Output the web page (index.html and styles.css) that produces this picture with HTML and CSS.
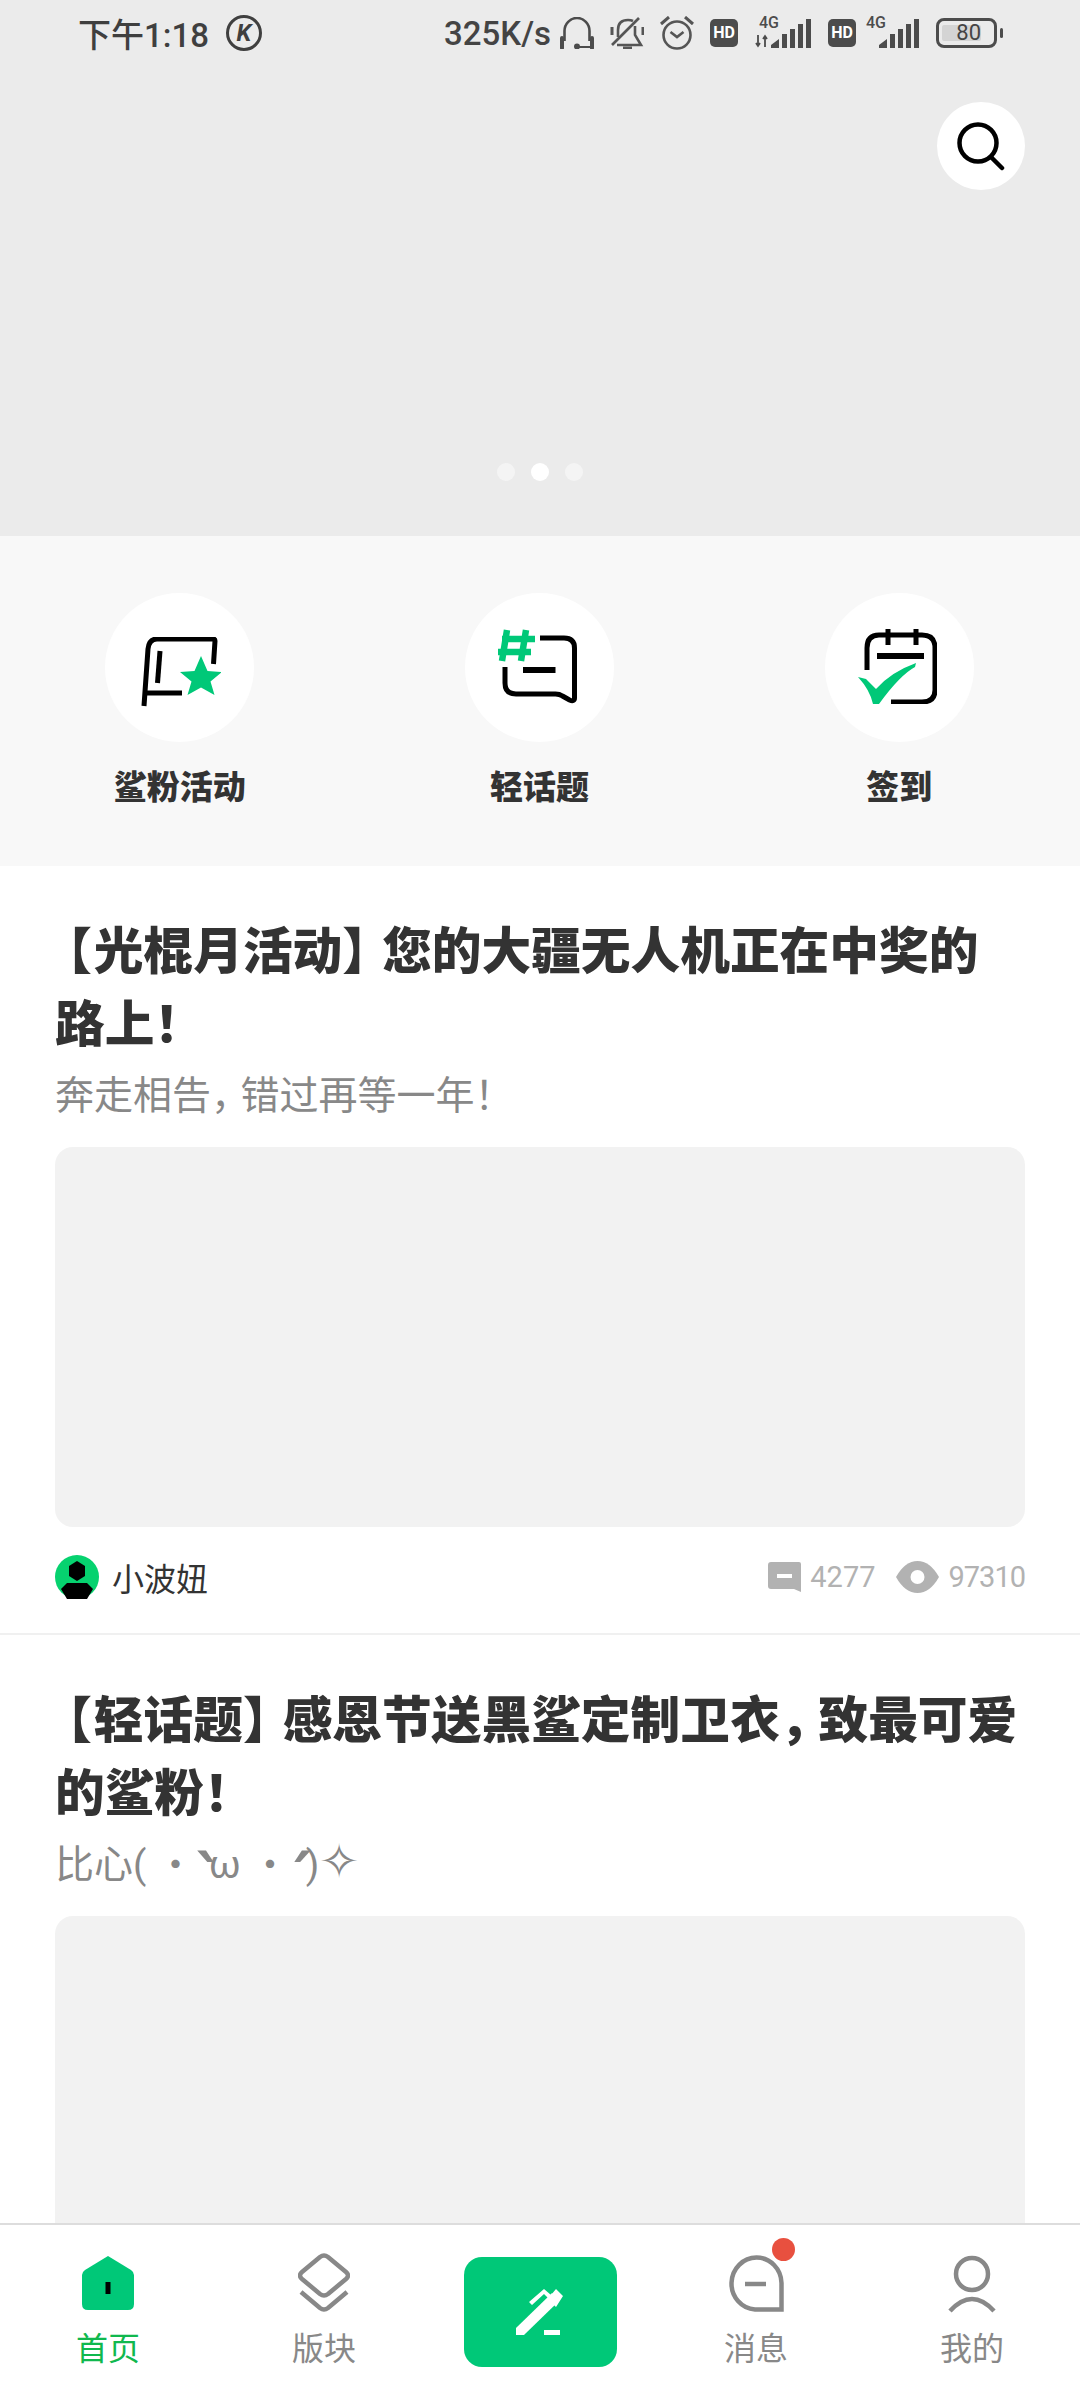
FILE: index.html
```html
<!doctype html>
<html>
<head>
  <title>首页</title>
  <meta charset="utf-8">
  <link rel="stylesheet" href="styles.css">
</head>
<body>
  <div class="phone">
    <div class="hero">
      <div class="status">
        <div class="status-left">
          <span class="clock">下午1:18</span>
          <span class="k-badge">K</span>
        </div>
        <div class="status-right">
          <span class="speed">325K/s</span>
          <svg class="st-icon" width="34" height="32" viewBox="0 0 34 32" fill="none" stroke="#4c4c4c" stroke-width="2.6"><path d="M4.500 24V14a12.500 13 0 0 1 25 0v10"/><path d="M2 21v10M32 21v10" stroke-width="4" stroke-linecap="round"/><path d="M17 30h13" stroke-width="2"/><circle cx="17" cy="29.500" r="3" fill="#4c4c4c" stroke="none"/></svg>
          <svg class="st-icon" width="34" height="32" viewBox="0 0 34 32" fill="none" stroke="#555" stroke-width="2.6"><path d="M8 20v-7Q8 3 18 3q3 0 5 1"/><path d="M25 9v9l6 10H7"/><path d="M2 28 29 1"/><path d="M2 10v8M33 10v8" stroke-width="3"/><path d="M13 31h9" stroke-width="3"/></svg>
          <svg class="st-icon" width="34" height="34" viewBox="0 0 34 34" fill="none" stroke="#555" stroke-width="2.6"><circle cx="17" cy="19" r="13.500"/><path d="m10.500 16 6.500 5 6.500-5"/><path d="M1 8l8-7M33 8l-8-7" stroke-width="3"/></svg>
          <span class="hd">HD</span>
          <span class="net net-one">
            <span class="four-g">4G</span>
            <svg width="56" height="32" viewBox="0 0 56 32" fill="#4c4c4c"><path d="M3 18v11M1 26l2 3 2-3M10 30V19M8 22l2-3 2 3" fill="none" stroke="#4c4c4c" stroke-width="1.8"/><path d="M16 31v-3l8-6v9zM27 31V17h5v14zM35 31V12h5v19zM43 31V7h5v24zM51 31V2h5v29z"/></svg>
          </span>
          <span class="hd">HD</span>
          <span class="net net-two">
            <span class="four-g">4G</span>
            <svg width="53" height="32" viewBox="0 0 53 32" fill="#4c4c4c"><path d="M13 31v-3l8-6v9zM24 31V17h5v14zM32 31V12h5v19zM40 31V7h5v24zM48 31V2h5v29z"/></svg>
          </span>
          <span class="battery"><span class="battery-num">80</span></span>
        </div>
      </div>
      <div class="search-row">
        <div class="search-btn">
          <svg width="50" height="50" viewBox="0 0 50 50" fill="none" stroke="#000" stroke-width="4.500" stroke-linecap="round"><circle cx="22" cy="22" r="18.500"/><path d="m35 36 11 11"/></svg>
        </div>
      </div>
      <div class="dots">
        <span class="dot"></span>
        <span class="dot on"></span>
        <span class="dot"></span>
      </div>
    </div>

    <div class="quick">
      <div class="quick-item">
        <div class="quick-circle">
          <svg class="qi-star" width="80" height="70" viewBox="0 0 80 70" fill="none" stroke="#000" stroke-width="5"><path d="M3 69 7 12q1-10 9-10h56q2 0 2 2l-1.500 23"/><path d="M3.500 56H41"/><path d="M19 14l-2.500 32"/><path d="M60 19l6.500 15 14.500 1-11.500 9.500 4 13.500-13.500-7.500-13.500 7.500 4-13.500-11.500-9.500 14.500-1z" fill="#00c878" stroke="none"/></svg>
        </div>
        <div class="quick-label">鲨粉活动</div>
      </div>
      <div class="quick-item">
        <div class="quick-circle">
          <svg class="qi-topic" width="80" height="76" viewBox="0 0 80 76" fill="none" stroke="#000" stroke-width="5"><path d="M43 10h24q10.500 0 10.500 10v50q0 4-5 2l-7-4q-3-2-7-2H19Q8 66 8 55V39"/><path d="M26 42h32.500" stroke-width="6"/><path d="M10 2 5 33M29 2l-5 31M5 11h33M1 24h33" stroke="#00c878" stroke-width="6.500"/></svg>
        </div>
        <div class="quick-label">轻话题</div>
      </div>
      <div class="quick-item">
        <div class="quick-circle">
          <svg class="qi-sign" width="79" height="75" viewBox="0 0 79 75" fill="none" stroke="#000" stroke-width="5"><path d="M9 41V19Q9 6 21 6h43q13 0 13 13v42q0 12-13 12H33"/><path d="M30 0v16M58 0v16"/><path d="M19 27h47" stroke-width="6"/><path d="M0 48l8 2 10 10q15-17 40-26l-1 4Q42 46 21 75h-6Q12 61 0 48z" fill="#00c878" stroke="none"/></svg>
        </div>
        <div class="quick-label">签到</div>
      </div>
    </div>

    <div class="post">
      <h2 class="post-title"><span class="br-l">【</span>光棍月活动<span class="br-r">】</span>您的大疆无人机正在中奖的路上！</h2>
      <p class="post-sub">奔走相告<span class="sub-comma">，</span>错过再等一年！</p>
      <div class="post-img"></div>
      <div class="post-meta">
        <div class="author">
          <svg class="avatar" width="44" height="44" viewBox="0 0 44 44"><circle cx="22" cy="22" r="22" fill="#06d26f"/><path d="M22 6l8 5v10l-8 5-8-5V11z" fill="#000"/><path d="M12 28h20l6 6-6 10H12L6 34z" fill="#000"/></svg>
          <span class="author-name">小波妞</span>
        </div>
        <div class="stats">
          <svg width="33" height="30" viewBox="0 0 33 30"><path d="M3 0h28q2 0 2 2v28l-7-3H3q-3 0-3-3V3q0-3 3-3z" fill="#b2b2b2"/><rect x="9" y="12" width="15" height="4" fill="#fff"/></svg>
          <span class="stat-num comments">4277</span>
          <svg width="43" height="32" viewBox="0 0 43 32"><path d="M0 16Q9 0 21.500 0T43 16Q34 32 21.500 32T0 16z" fill="#b2b2b2"/><circle cx="21.500" cy="16" r="7" fill="#fff"/></svg>
          <span class="stat-num views">97310</span>
        </div>
      </div>
    </div>

    <div class="post">
      <h2 class="post-title"><span class="br-l">【</span>轻话题<span class="br-r">】</span>感恩节送黑鲨定制卫衣<span class="title-comma">，</span>致最可爱的鲨粉！</h2>
      <p class="post-sub">比心( ・<span class="kao-mark left">`</span>ω ・<span class="kao-mark right">´</span>)<span class="kao-star">✧</span></p>
      <div class="post-img"></div>
    </div>

    <div class="tabbar">
      <div class="tab active">
        <div class="tab-icon">
          <svg width="52" height="54" viewBox="0 0 52 54"><path d="M26 0l23 14q3 2 3 5v29q0 6-6 6H6q-6 0-6-6V19q0-3 3-5z" fill="#00c878"/><rect x="23.500" y="26" width="5" height="12" fill="#000"/></svg>
        </div>
        <span>首页</span>
      </div>
      <div class="tab">
        <div class="tab-icon">
          <svg width="52" height="60" viewBox="0 0 52 60" fill="none" stroke="#888" stroke-width="4.500"><path d="M22 4q4-3 8 0l18 15q4 3.500 0 7L30 41q-4 3-8 0L4 26q-4-3.500 0-7z"/><path d="M3 39l19 16q4 3 8 0l19-16"/></svg>
        </div>
        <span>版块</span>
      </div>
      <div class="tab-write">
        <svg width="48" height="48" viewBox="0 0 48 48" fill="#fff"><path d="M0 40v7h8l35-34-7-8z"/><path d="M40 1l7 7-7 11-3-3 3-5-5-4z"/><path d="M13 14 28 1l7 6-3 3-4-4-12 11z"/><rect x="28" y="42" width="16" height="5"/></svg>
      </div>
      <div class="tab">
        <div class="tab-icon">
          <svg width="56" height="57" viewBox="0 0 56 57" fill="none" stroke="#888" stroke-width="4.500"><path d="M53.500 54.500H27A25 26 0 1 1 53.500 28z"/><path d="M17 29h21"/></svg>
        </div>
        <span class="red-dot"></span>
        <span>消息</span>
      </div>
      <div class="tab">
        <div class="tab-icon">
          <svg width="48" height="60" viewBox="0 0 48 60" fill="none" stroke="#888" stroke-width="4.500"><circle cx="24" cy="21" r="16"/><path d="M2 58q11-12 22-12t22 12"/></svg>
        </div>
        <span>我的</span>
      </div>
    </div>
  </div>
</body>
</html>
```
FILE: styles.css
```css
html, body {
  margin: 0;
  padding: 0;
}

body {
  background-color: #fff;
  font-family: "Roboto", "Noto Sans CJK SC", sans-serif;
}

.phone {
  width: 1080px;
  height: 2400px;
  position: relative;
  overflow: hidden;
  background: #fff;
}

.hero {
  height: 536px;
  background-color: #ebebeb;
  display: flex;
  flex-direction: column;
}

.status {
  height: 66px;
  display: flex;
  justify-content: space-between;
  align-items: center;
  padding: 0 77px 0 78px;
  color: #3f3f3f;
}

.status-left,
.status-right {
  display: flex;
  align-items: center;
}

.clock {
  font-size: 33px;
  font-weight: 500;
}

.k-badge {
  width: 30px;
  height: 30px;
  margin-left: 17px;
  border: 3px solid #3f3f3f;
  border-radius: 50%;
  font-size: 24px;
  font-style: italic;
  font-weight: 700;
  line-height: 30px;
  text-align: center;
}

.speed {
  font-size: 33px;
  font-weight: 500;
  color: #444;
  margin-right: 9px;
}

.st-icon {
  margin-right: 16px;
}

.hd {
  width: 28px;
  height: 28px;
  border-radius: 5px;
  background: #4c4c4c;
  color: #fff;
  font-size: 16px;
  font-weight: 700;
  line-height: 28px;
  text-align: center;
  margin-right: 17px;
}

.net {
  position: relative;
  display: flex;
  height: 32px;
  margin-right: 17px;
}

.hd + .net-two {
  margin-left: -7px;
}

.four-g {
  position: absolute;
  top: -4px;
  font-size: 16px;
  font-weight: 500;
  color: #4c4c4c;
}

.net-one .four-g {
  left: 4px;
}

.net-two .four-g {
  left: 0;
}

.battery {
  width: 61px;
  height: 30px;
  box-sizing: border-box;
  border: 3px solid #4c4c4c;
  border-radius: 8px;
  position: relative;
  display: flex;
  align-items: center;
  padding-left: 3px;
  margin-right: 6px;
}

.battery::after {
  content: "";
  position: absolute;
  right: -9px;
  top: 7px;
  width: 3px;
  height: 10px;
  border-radius: 2px;
  background: #4c4c4c;
}

.battery-num {
  width: 39px;
  height: 16px;
  line-height: 16px;
  background: #d4d4d4;
  border-radius: 2px;
  color: #444;
  font-size: 22px;
  text-align: right;
}

.search-row {
  display: flex;
  justify-content: flex-end;
  padding: 36px 55px 0 0;
}

.search-btn {
  width: 88px;
  height: 88px;
  border-radius: 50%;
  background: #fff;
  display: flex;
  align-items: center;
  justify-content: center;
}

.dots {
  display: flex;
  justify-content: center;
  gap: 16px;
  margin-top: 273px;
}

.dot {
  width: 18px;
  height: 18px;
  border-radius: 50%;
  background: #f4f4f4;
}

.dot.on {
  background: #fff;
}

.quick {
  height: 330px;
  background-color: #f8f8f8;
  display: grid;
  grid-template-columns: repeat(3, 1fr);
  padding: 57px 1px 0 0;
  box-sizing: border-box;
}

.quick-item {
  display: flex;
  flex-direction: column;
  align-items: center;
}

.quick-circle {
  width: 149px;
  height: 149px;
  border-radius: 50%;
  background: #fff;
  display: flex;
  align-items: center;
  justify-content: center;
}

.qi-star {
  margin: 8px 0 0 2px;
}

.qi-topic {
  margin: -3px 0 0 -5px;
}

.qi-sign {
  margin: -2px 0 0 -4px;
}

.quick-label {
  margin-top: 24px;
  font-size: 33px;
  font-weight: 900;
  color: #333;
  line-height: 44px;
}

.post {
  padding: 50px 55px 0;
  border-bottom: 2px solid #f0f0f0;
}

.post-title {
  margin: 0;
  font-size: 49.7px;
  line-height: 73px;
  font-weight: 900;
  color: #333;
}

/* half width punctuation, then opened up again with margins */
.br-l,
.br-r,
.title-comma,
.sub-comma {
  font-feature-settings: "halt";
}

.br-l {
  margin: 0 2px 0 12px;
}

.br-r {
  margin-right: 15px;
}

.title-comma {
  margin-right: 14px;
}

.post-sub {
  margin: 0;
  font-size: 39px;
  line-height: 68px;
  color: #888;
}

.sub-comma {
  margin-right: 10px;
}

.kao-mark {
  font-size: 80px;
  line-height: 0;
  vertical-align: -32px;
}

.kao-mark.left {
  margin-right: -11px;
}

.kao-mark.right {
  margin-right: -9px;
}

.kao-star {
  font-size: 48px;
  line-height: 0;
}

.post-img {
  height: 380px;
  margin-top: 17px;
  border-radius: 18px;
  background-color: #f2f2f2;
}

.post-meta {
  height: 106px;
  box-sizing: border-box;
  padding-bottom: 6px;
  display: flex;
  justify-content: space-between;
  align-items: center;
}

.author {
  display: flex;
  align-items: center;
  gap: 13px;
}

.author-name {
  font-size: 32px;
  color: #333;
}

.stats {
  display: flex;
  align-items: center;
}

.stat-num {
  margin-left: 10px;
  font-size: 29px;
  color: #b2b2b2;
}

.stat-num.comments {
  margin-left: 9px;
  margin-right: 20px;
}

.stat-num.views {
  letter-spacing: -1px;
}

.tabbar {
  position: absolute;
  left: 0;
  right: 0;
  bottom: 0;
  height: 177px;
  box-sizing: border-box;
  background: #fff;
  border-top: 2px solid #ddd;
  display: grid;
  grid-template-columns: repeat(5, 1fr);
  justify-items: center;
  align-items: start;
}

.tab {
  position: relative;
  display: flex;
  flex-direction: column;
  align-items: center;
  padding-top: 28px;
  width: 120px;
  color: #888;
  font-size: 32px;
  line-height: 44px;
}

.tab-icon {
  height: 60px;
  margin-bottom: 14px;
  display: flex;
  align-items: center;
}

.tab.active {
  color: #10b84e;
}

.tab-write {
  width: 153px;
  height: 110px;
  margin-top: 32px;
  border-radius: 18px;
  background-color: #00c878;
  display: flex;
  align-items: center;
  justify-content: center;
}

.red-dot {
  position: absolute;
  top: 13px;
  right: 21px;
  width: 23px;
  height: 23px;
  border-radius: 50%;
  background: #e8503f;
}
```
